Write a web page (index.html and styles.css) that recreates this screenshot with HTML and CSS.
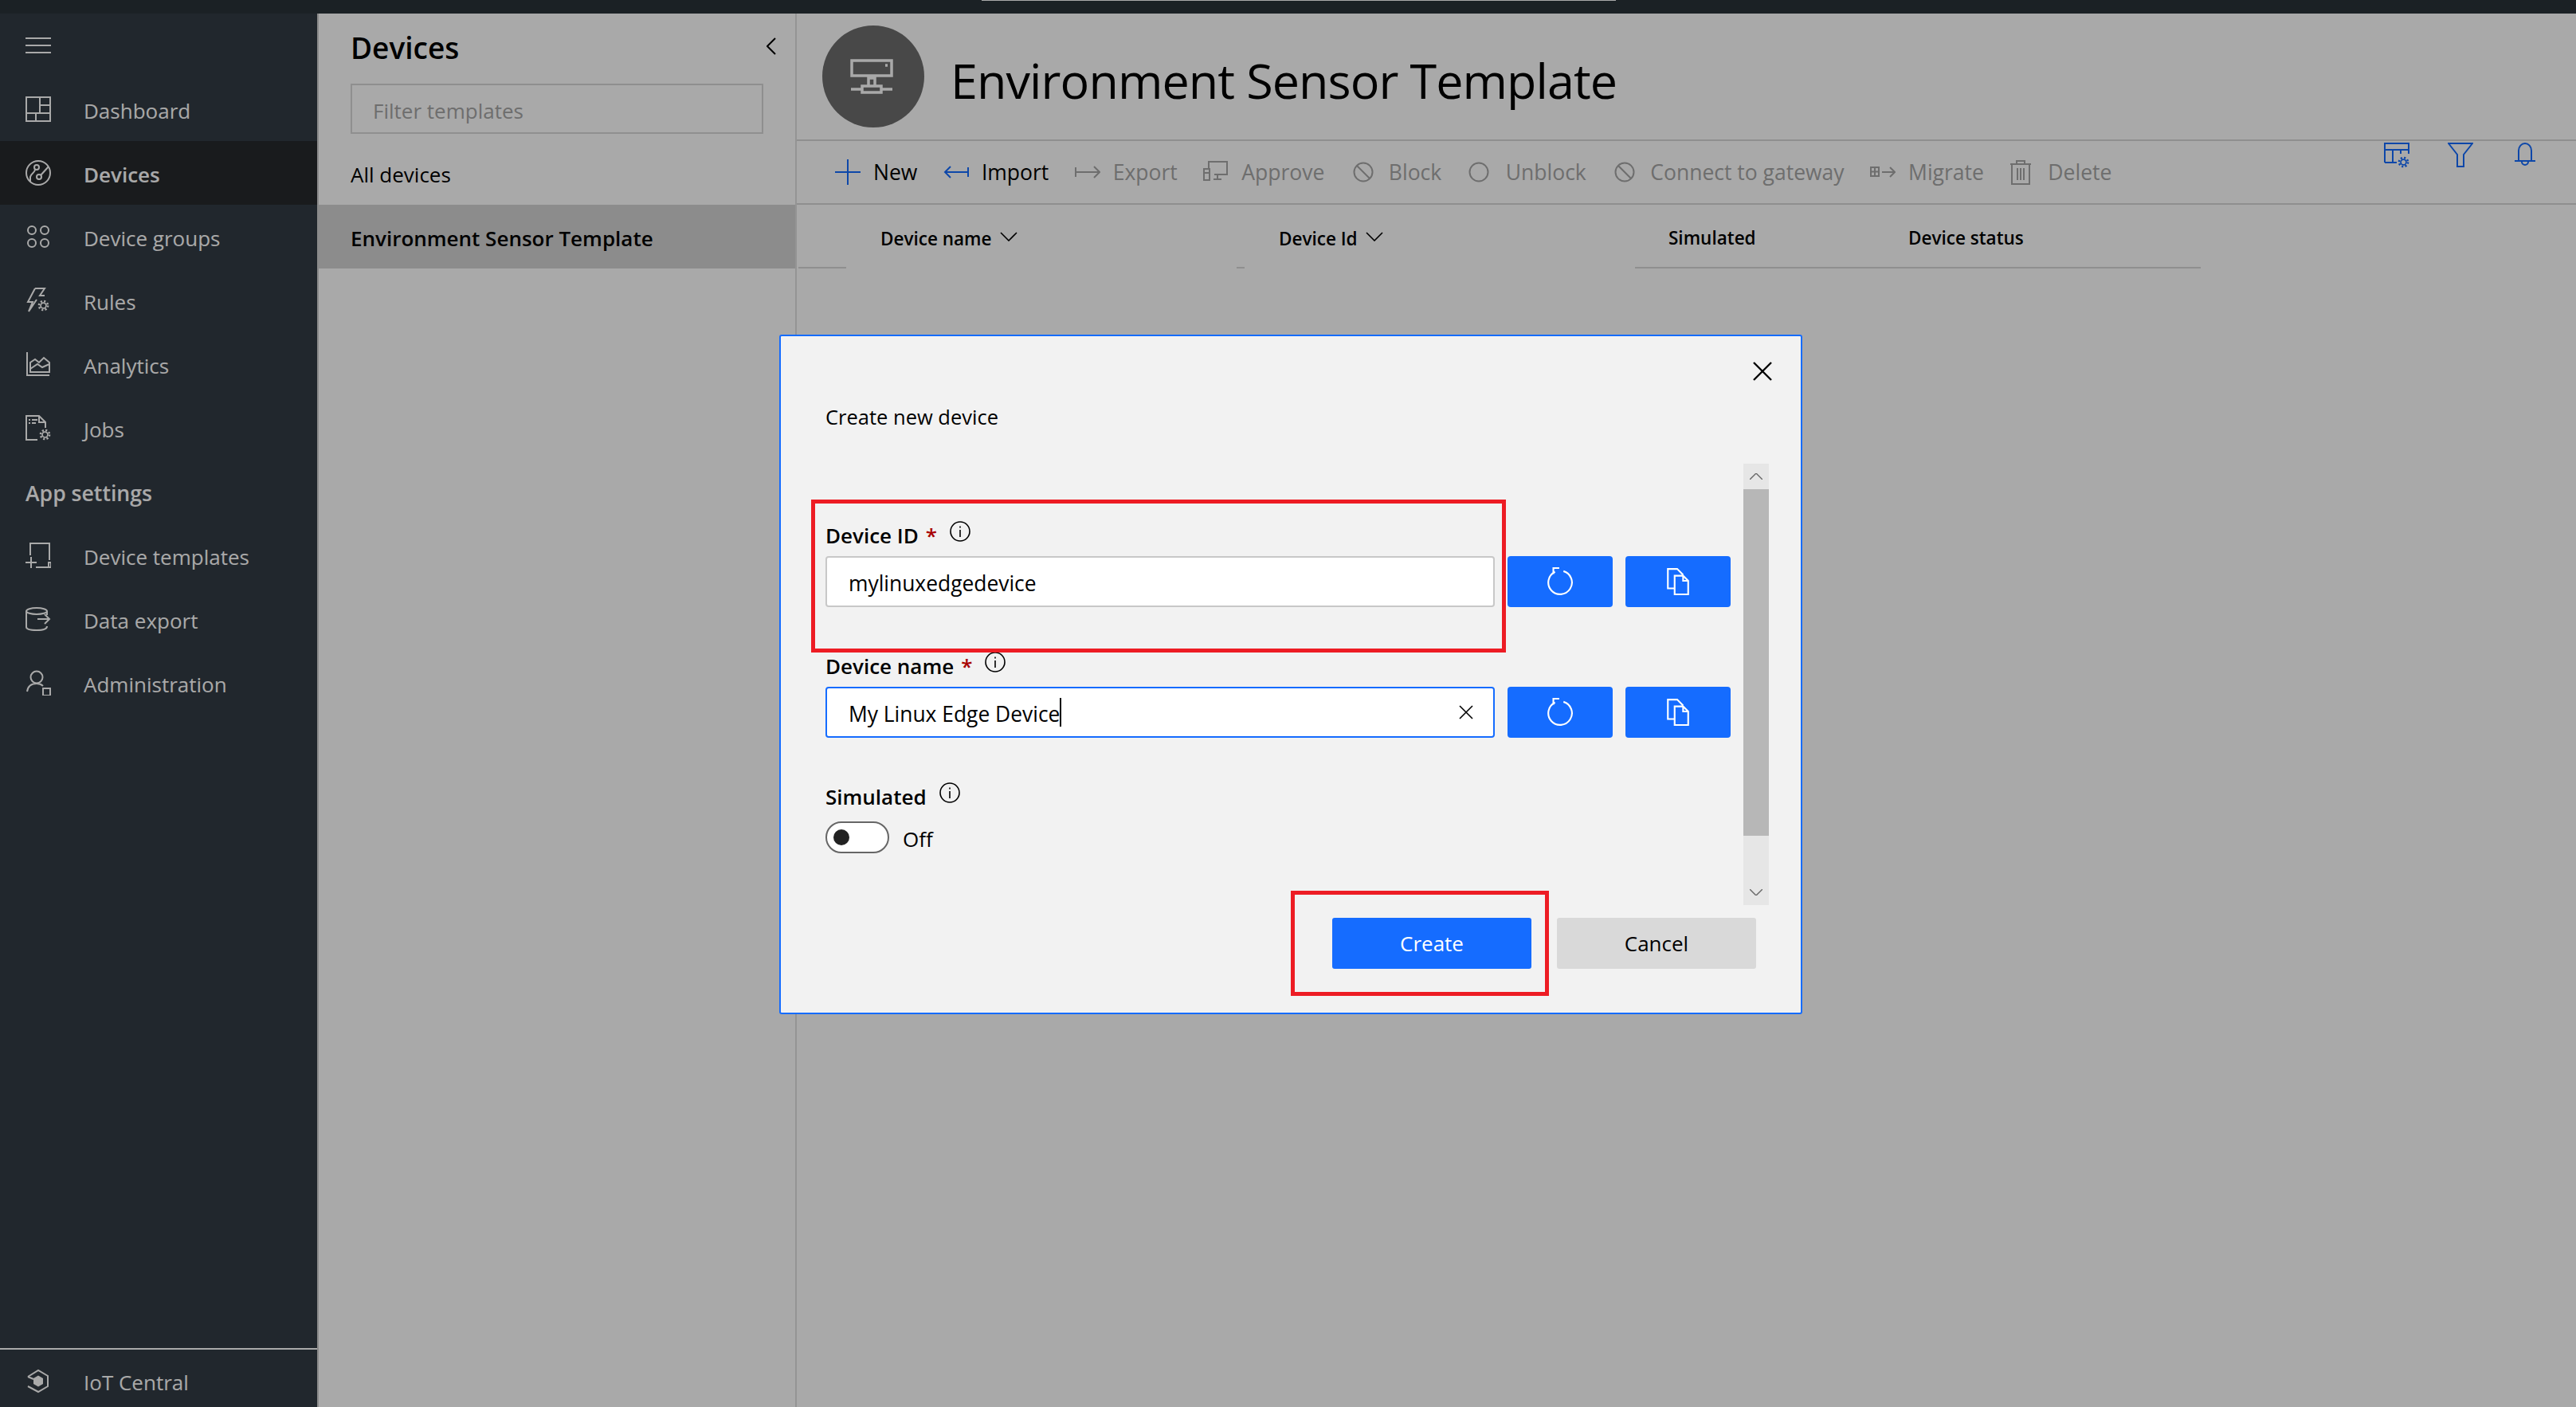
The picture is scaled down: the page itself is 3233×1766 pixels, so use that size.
FILE: index.html
```html
<!doctype html>
<html>
  <head>
    <title>Environment Sensor Template - Devices</title>
    <meta charset="utf-8"/>
    <link rel="stylesheet" href="styles.css">
  </head>
  <body>
    <svg class="defs" width="0" height="0">
      <symbol id="gear" viewBox="0 0 14 14">
        <circle cx="7" cy="7" r="3.2" fill="none" stroke="currentColor" stroke-width="1.6"/>
        <circle cx="7" cy="7" r="5.2" fill="none" stroke="currentColor" stroke-width="2.4" stroke-dasharray="2 2.08"/>
      </symbol>
      <symbol id="refresh" viewBox="0 0 32 34">
        <path d="M20 4.6A14 14 0 1 1 10 5.4M15 1H8V8" fill="none" stroke="currentColor" stroke-width="2"/>
      </symbol>
      <symbol id="copy" viewBox="0 0 26 32">
        <path d="M8 24H1V1H12L19 8M9 9H19L25 15V31H9ZM19 9V15H25" fill="none" stroke="currentColor" stroke-width="2"/>
      </symbol>
      <symbol id="info" viewBox="0 0 26 26">
        <circle cx="13" cy="13" r="12" fill="none" stroke="currentColor" stroke-width="1.6"/>
        <path d="M13 11V20M13 6.5V8.5" fill="none" stroke="currentColor" stroke-width="1.6"/>
      </symbol>
      <symbol id="block" viewBox="0 0 32 32">
        <circle cx="16" cy="16" r="11.5" fill="none" stroke="currentColor" stroke-width="2"/>
        <path d="M8 8L24 24" fill="none" stroke="currentColor" stroke-width="2"/>
      </symbol>
    </svg>

    <div class="topbar"><div class="topbar-line"></div></div>

    <div class="app">
      <nav class="sidebar">
        <div class="nav-row">
          <svg class="icon" viewBox="0 0 32 32"><path d="M0 7H32M0 16H32M0 25H32"/></svg>
        </div>
        <a class="nav-row">
          <svg class="icon" viewBox="0 0 32 32"><path d="M1 1H31V31H1ZM18 1V21M1 21H31M13 21V31M18 11H31"/></svg>
          <span>Dashboard</span>
        </a>
        <a class="nav-row active">
          <svg class="icon" viewBox="0 0 32 32"><circle cx="16" cy="16" r="15"/><circle cx="14" cy="9" r="3"/><circle cx="17" cy="21" r="3"/><path d="M19 19L29 8M12 11.500C12 16 7 16 6 21V27"/></svg>
          <span>Devices</span>
        </a>
        <a class="nav-row">
          <svg class="icon" viewBox="0 0 32 32"><circle cx="8" cy="8" r="5"/><circle cx="24" cy="8" r="5"/><circle cx="8" cy="24" r="5"/><circle cx="24" cy="24" r="5"/></svg>
          <span>Device groups</span>
        </a>
        <a class="nav-row">
          <svg class="icon" viewBox="0 0 32 32"><path d="M12 1H24L18 10H24M14 15L4 30L9 18H3L12 1M18 10H22"/><use href="#gear" x="15" y="15" width="15" height="15"/></svg>
          <span>Rules</span>
        </a>
        <a class="nav-row">
          <svg class="icon" viewBox="0 0 32 32"><path d="M2 1V30H30M6 26V14L12 10L17 14L23 8L30 14V26ZM6 22L15 16L21 20L30 16"/></svg>
          <span>Analytics</span>
        </a>
        <a class="nav-row">
          <svg class="icon" viewBox="0 0 32 32"><path d="M15 31H1V1H17L25 9V16M17 1V9H25M4 6H6M8 6H15M4 10H6M8 10H13"/><use href="#gear" x="17" y="17" width="15" height="15"/></svg>
          <span>Jobs</span>
        </a>
        <div class="nav-row nav-heading">App settings</div>
        <a class="nav-row">
          <svg class="icon" viewBox="0 0 32 32"><path d="M6 16V1H30V22M13 31H32V25H29V31M0 25H14M7 18V32"/></svg>
          <span>Device templates</span>
        </a>
        <a class="nav-row">
          <svg class="icon" viewBox="0 0 32 32"><ellipse cx="14" cy="6" rx="13" ry="4"/><path d="M1 6V26C1 29 8 30 14 30C20 30 27 29 27 25M27 6V11M15 16H30M24 10L30 16L24 22"/></svg>
          <span>Data export</span>
        </a>
        <a class="nav-row">
          <svg class="icon" viewBox="0 0 32 32"><circle cx="14" cy="9" r="7.500"/><path d="M2 27C3 20 8 17 14 17C17 17 20 18 22 20M22 23H31V32H22Z"/></svg>
          <span>Administration</span>
        </a>
        <a class="nav-row nav-foot">
          <svg class="icon" viewBox="0 0 32 32"><path d="M3 11L16 3L28 10V23L16 30L3 23M3 11L10 14"/><path class="solid" d="M16 9.500L22 13V20L16 23.500L10 20V13Z"/></svg>
          <span>IoT Central</span>
        </a>
      </nav>

      <section class="panel">
        <div class="panel-head">
          <h2>Devices</h2>
          <svg class="collapse" viewBox="0 0 12 22"><path d="M11 1L1 11L11 21"/></svg>
        </div>
        <div class="filter">Filter templates</div>
        <div class="panel-row">All devices</div>
        <div class="panel-row selected">Environment Sensor Template</div>
      </section>

      <main class="main">
        <header class="page-head">
          <div class="avatar">
            <svg viewBox="0 0 128 128"><path d="M37 44H87V63H37ZM62 63V66M58 76V66H66V76M50 76H74V84H50ZM36 80H50M74 80H88M79 50H82"/></svg>
          </div>
          <h1>Environment Sensor Template</h1>
        </header>

        <div class="toolbar">
          <a class="tool on"><svg class="icon" viewBox="0 0 32 32"><path d="M0 16H32M16 0V32"/></svg>New</a>
          <a class="tool on"><svg class="icon" viewBox="0 0 32 32"><path d="M31 10V22M31 16H2M9 9L2 16L9 23"/></svg>Import</a>
          <a class="tool"><svg class="icon" viewBox="0 0 32 32"><path d="M1 10V22M1 16H31M24 9L31 16L24 23"/></svg>Export</a>
          <a class="tool"><svg class="icon" viewBox="0 0 32 32"><path d="M7 11V3H30V19H14M1 12H8V26H1ZM1 17H8M18 19V24M13 25H23"/></svg>Approve</a>
          <a class="tool"><svg class="icon"><use href="#block"/></svg>Block</a>
          <a class="tool"><svg class="icon" viewBox="0 0 32 32"><circle cx="14" cy="16" r="11.500"/></svg>Unblock</a>
          <a class="tool"><svg class="icon"><use href="#block"/></svg>Connect to gateway</a>
          <a class="tool"><svg class="icon" viewBox="0 0 32 32"><path d="M1 10H11V21H1ZM6 10V21M1 15.500H11M15 16H31M25 10L31 16L25 22"/></svg>Migrate</a>
          <a class="tool"><svg class="icon" viewBox="0 0 32 32"><path d="M1 6H27M3 6V31H25V6M9 6V2H19V6M10 11V26M14 11V26M18 11V26"/></svg>Delete</a>
          <div class="tool-right">
            <svg class="icon" viewBox="0 0 32 32"><path d="M1 25V1H31V14M1 9H31M11 9V25M1 25H16M21 9V14"/><use href="#gear" x="17" y="17" width="15" height="15"/></svg>
            <svg class="icon" viewBox="0 0 32 32"><path d="M1 1H31L20 15V30H12V15Z"/></svg>
            <svg class="icon bell" viewBox="0 0 32 32"><path d="M5 23V10A8 9 0 0 1 21 10V23M0 23H26M9 24A4 4 0 0 0 17 24"/></svg>
          </div>
        </div>

        <div class="thead">
          <div class="th-gap first"></div>
          <div class="th name">Device name<svg class="sort" viewBox="0 0 22 12"><path d="M1 1L11 11L21 1"/></svg></div>
          <div class="th-gap mid"></div>
          <div class="th name">Device Id<svg class="sort" viewBox="0 0 22 12"><path d="M1 1L11 11L21 1"/></svg></div>
          <div class="th sim">Simulated</div>
          <div class="th status">Device status</div>
        </div>
      </main>
    </div>

    <div class="scrim"></div>

    <div class="dialog">
      <svg class="close" viewBox="0 0 24 24"><path d="M1 1L23 23M23 1L1 23"/></svg>
      <div class="dialog-title">Create new device</div>

      <div class="dialog-body">
        <form class="fields">
          <div class="field">
            <div class="label"><b>Device ID</b><i>*</i><svg class="info"><use href="#info"/></svg></div>
            <div class="input-row">
              <div class="input">mylinuxedgedevice</div>
              <button class="square" type="button"><svg class="ico-refresh"><use href="#refresh"/></svg></button>
              <button class="square" type="button"><svg class="ico-copy"><use href="#copy"/></svg></button>
            </div>
          </div>
          <div class="field">
            <div class="label"><b>Device name</b><i>*</i><svg class="info"><use href="#info"/></svg></div>
            <div class="input-row">
              <div class="input focus">My Linux Edge Device<span class="caret"></span>
                <svg class="clear" viewBox="0 0 18 18"><path d="M1 1L17 17M17 1L1 17"/></svg>
              </div>
              <button class="square" type="button"><svg class="ico-refresh"><use href="#refresh"/></svg></button>
              <button class="square" type="button"><svg class="ico-copy"><use href="#copy"/></svg></button>
            </div>
          </div>
          <div class="field">
            <div class="label plain"><b>Simulated</b><svg class="info"><use href="#info"/></svg></div>
            <div class="toggle-row"><span class="toggle"><span class="knob"></span></span><span class="toggle-text">Off</span></div>
          </div>
        </form>
        <div class="scrollbar">
          <div class="arrow"><svg viewBox="0 0 16 8"><path d="M0 8L8 0L16 8"/></svg></div>
          <div class="thumb"></div>
          <div class="track"></div>
          <div class="arrow"><svg viewBox="0 0 16 8"><path d="M0 0L8 8L16 0"/></svg></div>
        </div>
      </div>

      <div class="dialog-foot">
        <button class="btn primary" type="button">Create</button>
        <button class="btn" type="button">Cancel</button>
      </div>

      <div class="callout one"></div>
      <div class="callout two"></div>
    </div>
  </body>
</html>
```

FILE: styles.css
```css
*{
  box-sizing:border-box;
}
html,body{
  margin:0;
  padding:0;
  height:100%;
  overflow:hidden;
}
body{
  position:relative;
  background:#fff;
  color:#000;
  font-family:"Open Sans",sans-serif;
  font-size:26px;
}
.defs{
  position:absolute;
}
.icon{
  flex:none;
  width:32px;
  height:32px;
  fill:none;
  stroke:currentColor;
  stroke-width:2;
}
.icon .solid{
  fill:currentColor;
  stroke:none;
}

/* top strip */
.topbar{
  height:17px;
  background:#293239;
}
.topbar-line{
  margin-left:1232px;
  width:796px;
  height:1px;
  background:#fff;
}
.app{
  display:flex;
  height:calc(100% - 17px);
}

/* left nav */
.sidebar{
  flex:none;
  display:flex;
  flex-direction:column;
  width:400px;
  background:#333c44;
  border-right:2px solid #d0d0d0;
  color:#fff;
}
.nav-row{
  flex:none;
  display:flex;
  align-items:center;
  gap:41px;
  height:80px;
  padding-left:32px;
}
.nav-row span{
  padding-top:4px;
}
.nav-row.active{
  background:#272a2d;
  font-weight:600;
}
.nav-heading{
  padding-top:4px;
  font-size:26.6px;
  font-weight:600;
}
.nav-foot{
  margin-top:auto;
  height:74px;
  padding-top:6px;
  border-top:2px solid #fff;
}

/* device list panel */
.panel{
  flex:none;
  width:600px;
  border-right:2px solid #e0e0e0;
}
.panel-head{
  display:flex;
  align-items:center;
  justify-content:space-between;
  height:88px;
  padding:0 24px 0 40px;
}
.panel-head h2{
  margin:0 0 4px;
  font-size:37px;
  font-weight:600;
}
.collapse{
  width:12px;
  height:22px;
  margin-bottom:6px;
  fill:none;
  stroke:#000;
  stroke-width:2;
}
.filter{
  display:flex;
  align-items:center;
  width:518px;
  height:63px;
  margin:0 0 9px 40px;
  padding:4px 0 0 26px;
  border:2px solid #d8d8d8;
  color:#a6a6a6;
}
.panel-row{
  display:flex;
  align-items:center;
  height:80px;
  padding:4px 0 0 40px;
}
.panel-row.selected{
  background:#d3d3d3;
  font-weight:600;
}

/* main column */
.main{
  flex:1;
  min-width:0;
}
.page-head{
  display:flex;
  align-items:center;
  gap:33px;
  height:160px;
  padding-left:32px;
  border-bottom:2px solid #d8d8d8;
}
.avatar{
  flex:none;
  width:128px;
  height:128px;
  border-radius:50%;
  background:#6d6d6d;
}
.avatar svg{
  display:block;
  fill:none;
  stroke:#fff;
  stroke-width:3.5;
}
.page-head h1{
  margin:0;
  padding-top:8px;
  font-size:61px;
  font-weight:400;
  letter-spacing:-.9px;
}
.toolbar{
  position:relative;
  display:flex;
  align-items:center;
  gap:32.5px;
  height:80px;
  padding-left:48px;
  border-bottom:2px solid #d8d8d8;
  color:#a6a6a6;
  font-size:26.5px;
}
.tool{
  display:flex;
  align-items:center;
  gap:16px;
}
.tool.on{
  color:#000;
}
.tool.on .icon{
  color:#156cff;
}
.tool-right{
  align-self:flex-start;
  display:flex;
  gap:48px;
  margin-left:auto;
  margin-right:45px;
  padding-top:2px;
  color:#156cff;
}
.bell{
  margin-left:4px;
}
.thead{
  display:flex;
  height:80px;
  font-size:22.5px;
  font-weight:600;
}
.th,.th-gap{
  display:flex;
  align-items:center;
  height:80px;
  padding-top:4px;
}
.th-gap.first{
  width:60px;
  margin-left:2px;
  border-bottom:2px solid #d8d8d8;
}
.th-gap.mid{
  width:10px;
  border-bottom:2px solid #d8d8d8;
}
.th.name{
  width:490px;
  padding-left:43px;
}
.th.sim{
  width:343px;
  padding-left:42px;
  border-bottom:2px solid #d8d8d8;
}
.th.status{
  width:367px;
  border-bottom:2px solid #d8d8d8;
}
.sort{
  width:22px;
  height:12px;
  margin:-4px 0 0 10px;
  fill:none;
  stroke:#000;
  stroke-width:1.6;
}

/* modal */
.scrim{
  position:absolute;
  inset:0;
  background:rgba(0,0,0,.337);
}
.dialog{
  position:absolute;
  left:978px;
  top:420px;
  width:1284px;
  height:853px;
  padding:83px 0 0 56px;
  background:#f2f2f2;
  border:2px solid #156cff;
  border-radius:3px;
}
.close{
  position:absolute;
  right:36px;
  top:32px;
  width:24px;
  height:24px;
  fill:none;
  stroke:#000;
  stroke-width:2.4;
}
.dialog-title{
  height:36px;
  line-height:36px;
  font-size:25.5px;
}
.dialog-body{
  display:flex;
  gap:16px;
  height:554px;
  margin-top:41px;
}
.fields{
  width:1136px;
  padding-top:72px;
}
.field{
  margin-bottom:56px;
}
.label{
  display:flex;
  align-items:flex-start;
  height:36px;
  line-height:36px;
  margin-bottom:8px;
}
.label.plain{
  margin-bottom:13px;
}
.label b{
  font-weight:600;
}
.label i{
  margin-left:9px;
  color:#a80000;
  font-style:normal;
  font-weight:600;
}
.info{
  width:26px;
  height:26px;
  margin-left:16px;
  color:#000;
}
.input-row{
  display:flex;
  gap:16px;
}
.input{
  position:relative;
  display:flex;
  align-items:center;
  width:840px;
  height:64px;
  padding:4px 0 0 27px;
  background:#fff;
  border:2px solid #c8c8c8;
  border-radius:4px;
  font-size:26.4px;
}
.input.focus{
  border-color:#156cff;
}
.caret{
  width:2px;
  height:36px;
  margin-top:-4px;
  background:#000;
}
.clear{
  position:absolute;
  right:25px;
  top:21px;
  width:18px;
  height:18px;
  fill:none;
  stroke:#000;
  stroke-width:1.6;
}
.square{
  display:flex;
  align-items:center;
  justify-content:center;
  width:132px;
  height:64px;
  padding:0;
  background:#156cff;
  border:0;
  border-radius:4px;
  color:#fff;
}
.ico-refresh{
  width:34px;
  height:36px;
}
.ico-copy{
  width:28px;
  height:34px;
}
.toggle-row{
  display:flex;
  align-items:center;
  gap:17px;
}
.toggle-text{
  padding-top:4px;
}
.toggle{
  display:flex;
  align-items:center;
  width:80px;
  height:40px;
  padding-left:8px;
  background:#fff;
  border:2px solid #666;
  border-radius:20px;
}
.knob{
  width:20px;
  height:20px;
  border-radius:50%;
  background:#222;
}
.scrollbar{
  display:flex;
  flex-direction:column;
  width:32px;
}
.arrow{
  display:flex;
  align-items:center;
  justify-content:center;
  height:32px;
  background:#e6e6e6;
}
.arrow svg{
  width:16px;
  height:8px;
  fill:none;
  stroke:#666;
  stroke-width:1.4;
}
.thumb{
  height:435px;
  background:#b7b7b7;
}
.track{
  flex:1;
  background:#e6e6e6;
}
.dialog-foot{
  display:flex;
  justify-content:flex-end;
  gap:32px;
  width:1168px;
  margin-top:16px;
}
.btn{
  width:250px;
  height:64px;
  padding:0;
  background:#d9d9d9;
  border:0;
  border-radius:3px;
  color:#000;
  font:inherit;
}
.btn.primary{
  background:#156cff;
  color:#fff;
}
.callout{
  position:absolute;
  border:5px solid #ed1c24;
}
.callout.one{
  left:38px;
  top:205px;
  width:872px;
  height:192px;
}
.callout.two{
  left:640px;
  top:696px;
  width:324px;
  height:132px;
}
```
